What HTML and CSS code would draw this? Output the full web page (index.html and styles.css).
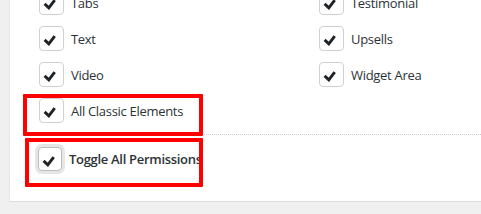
FILE: index.html
```html
<!DOCTYPE html>
<html lang="en">
<head>
  <meta charset="UTF-8">
  <title>Permissions</title>
  <link rel="stylesheet" href="styles.css">
</head>
<body>

  <div class="panel">
    <div class="perm-list">
      <label class="perm"><span class="check"><svg viewBox="0 0 25 25"><polyline points="5,14 9.6,18.3 16,10"/></svg></span>Tabs</label>
      <label class="perm"><span class="check"><svg viewBox="0 0 25 25"><polyline points="5,14 9.6,18.3 16,10"/></svg></span>Testimonial</label>
      <label class="perm"><span class="check"><svg viewBox="0 0 25 25"><polyline points="5,14 9.6,18.3 16,10"/></svg></span>Text</label>
      <label class="perm"><span class="check"><svg viewBox="0 0 25 25"><polyline points="5,14 9.6,18.3 16,10"/></svg></span>Upsells</label>
      <label class="perm"><span class="check"><svg viewBox="0 0 25 25"><polyline points="5,14 9.6,18.3 16,10"/></svg></span>Video</label>
      <label class="perm"><span class="check"><svg viewBox="0 0 25 25"><polyline points="5,14 9.6,18.3 16,10"/></svg></span>Widget Area</label>
      <label class="perm"><span class="check"><svg viewBox="0 0 25 25"><polyline points="5,14 9.6,18.3 16,10"/></svg></span>All Classic Elements</label>
    </div>

    <label class="perm toggle-all"><span class="check focused"><svg viewBox="0 0 25 25"><polyline points="5,14 9.6,18.3 16,10"/></svg></span><span class="toggle-text">Toggle All Permissions</span></label>

    <div class="mark mark-classic"></div>
    <div class="mark mark-toggle"></div>
  </div>

</body>
</html>
```

FILE: styles.css
```css
* {
  margin: 0;
  padding: 0;
  box-sizing: border-box;
}

body {
  font-family: 'Open Sans', 'Noto Sans', sans-serif;
  font-size: 13px;
  letter-spacing: -0.3px;
  color: #2c3338;
  background-color: #f0f0f1;
  padding-left: 9px;
  overflow: hidden;
}

.panel {
  position: relative;
  background-color: #fff;
  border-left: 1px solid #e6e6e6;
  border-bottom: 1px solid #dcdcde;
  padding: 0 0 31px 29px;
  height: 212px;
  margin-top: -10px;
}

.perm-list {
  display: grid;
  grid-template-columns: 280px 1fr;
  row-gap: 11px;
  padding-bottom: 11px;
  border-bottom: 1px dotted #ccc;
}

.perm {
  display: flex;
  align-items: center;
  gap: 7px;
  height: 25px;
  white-space: nowrap;
}

.check {
  width: 25px;
  height: 25px;
  border: 1px solid #d0d0d0;
  border-radius: 4px;
  background-color: #fff;
  flex-shrink: 0;
}

.check svg {
  display: block;
  width: 23px;
  height: 23px;
}

.check polyline {
  fill: none;
  stroke: #1d2327;
  stroke-width: 3.2;
}

.check.focused {
  width: 24px;
  height: 24px;
  border-color: #bdbdbd;
  box-shadow: 0 0 0 3px #e6e6e6;
}

.toggle-all {
  margin-top: 11px;
  margin-left: -1px;
  font-weight: 600;
}

.toggle-text {
  display: block;
  max-width: 132px;
  overflow: hidden;
}

.mark {
  position: absolute;
  border: 4px solid #f00;
  border-radius: 1px;
}

.mark-classic {
  left: 13px;
  top: 104px;
  width: 180px;
  height: 42px;
}

.mark-toggle {
  left: 15px;
  top: 148px;
  width: 178px;
  height: 49px;
}
```
